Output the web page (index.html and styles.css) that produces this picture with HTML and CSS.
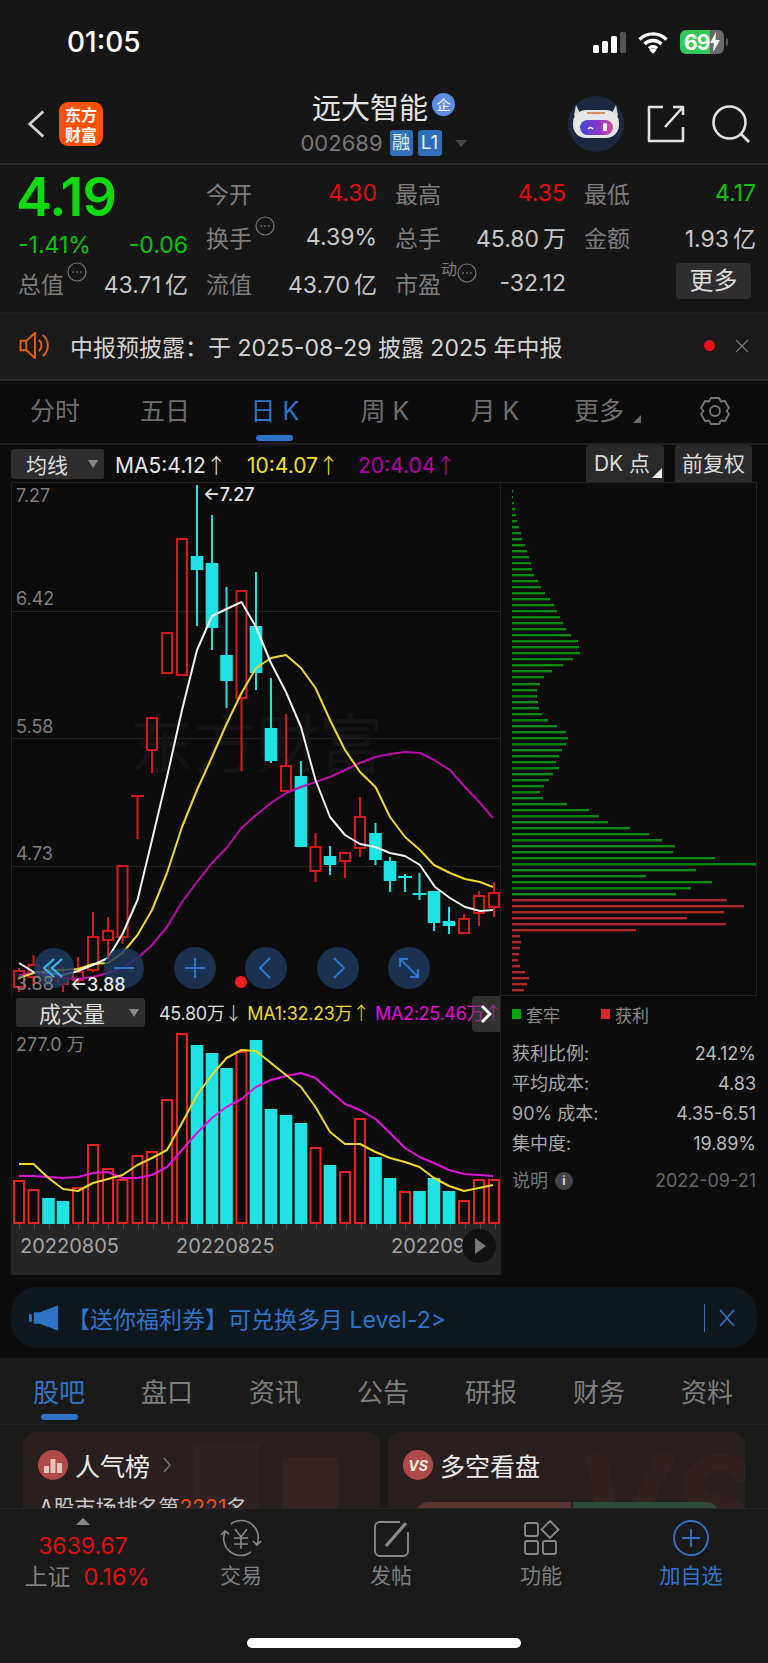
FILE: index.html
```html
<!DOCTYPE html>
<html lang="zh">
<head>
<meta charset="utf-8">
<title>远大智能</title>
<link rel="stylesheet" href="styles.css">
</head>
<body>
<div class="page">
  <header class="status">
    <span class="time">01:05</span>
    <div class="status-icons">
      <div class="signal"><i class="b1"></i><i class="b2"></i><i class="b3"></i><i class="b4"></i></div>
      <svg class="wifi" viewBox="0 0 30 23"><path d="M1.5 8.5a19 19 0 0 1 27 0M6.5 13a12 12 0 0 1 17 0M11 17.4a5.500 5.500 0 0 1 8 0" fill="none" stroke="#fff" stroke-width="3.400"/><path d="M15 23l-3.600-4a5 5 0 0 1 7.200 0z" fill="#fff"/></svg>
      <div class="battery"><span class="batt-num">69</span><svg class="bolt" viewBox="0 0 10 20"><path d="M6 0L0 11h4l-1 9 7-12H5.500z" fill="#fff"/></svg></div>
      <i class="nub"></i>
    </div>
  </header>

  <nav class="nav">
    <div class="nav-left">
      <svg class="back" viewBox="0 0 20 32"><path d="M18 2L3 16l15 14" fill="none" stroke="#d4d4d4" stroke-width="3"/></svg>
      <div class="logo"><span>东方</span><span>财富</span></div>
    </div>
    <div class="nav-center">
      <div class="title-row"><span class="title">远大智能</span><span class="qi">企</span></div>
      <div class="code-row"><span class="code">002689</span><span class="tag tag-rong">融</span><span class="tag tag-l1">L1</span><i class="caret"></i></div>
    </div>
    <div class="nav-right">
      <svg class="avatar" viewBox="0 0 56 56">
        <defs><linearGradient id="visor" x1="0" x2="1"><stop offset="0" stop-color="#3d49d8"/><stop offset=".55" stop-color="#8a35c8"/><stop offset="1" stop-color="#d84a9c"/></linearGradient></defs>
        <circle cx="28" cy="28" r="28" fill="#1c2740"/>
        <path d="M8 9l4 8h32l4-8 2 10-4 6H10l-4-6z" fill="#d8d8d8"/>
        <rect x="5" y="14" width="46" height="28" rx="13" fill="#e6e6e6"/>
        <rect x="19" y="16" width="18" height="2" fill="#d09060"/>
        <rect x="12" y="24" width="33" height="15" rx="7.500" fill="url(#visor)"/>
        <path d="M20 33q2.500-3 5 0" fill="none" stroke="#fff" stroke-width="1.500"/>
        <rect x="35" y="27" width="4" height="8" rx="1.500" fill="#fff"/>
      </svg>
      <svg class="share" viewBox="0 0 38 38"><path d="M16 2H2v34h34V22M36 10V2H26M36 2L18 22" fill="none" stroke="#e2e2e2" stroke-width="2.600" stroke-linejoin="round"/></svg>
      <svg class="search" viewBox="0 0 38 38"><circle cx="17.500" cy="17.500" r="16" fill="none" stroke="#e2e2e2" stroke-width="2.600"/><path d="M29 29l8 8" stroke="#e2e2e2" stroke-width="2.600"/></svg>
    </div>
  </nav>

  <section class="quote">
    <div class="price">4.19</div>
    <div class="cell"><span class="lbl">今开</span><span class="rd">4.30</span></div>
    <div class="cell"><span class="lbl">最高</span><span class="rd">4.35</span></div>
    <div class="cell"><span class="lbl">最低</span><span class="gn">4.17</span></div>

    <div class="cell change"><span class="gn">-1.41%</span><span class="gn">-0.06</span></div>
    <div class="cell"><span class="lbl">换手<svg class="dots" viewBox="0 0 20 20"><circle cx="10" cy="10" r="9" fill="none" stroke="#777" stroke-width="1.200"/><path d="M5.500 10h1.500M9.300 10h1.500M13 10h1.500" stroke="#777" stroke-width="1.500"/></svg></span><span class="val">4.39%</span></div>
    <div class="cell"><span class="lbl">总手</span><span class="val">45.80<span class="unit">万</span></span></div>
    <div class="cell"><span class="lbl">金额</span><span class="val">1.93<span class="unit">亿</span></span></div>

    <div class="cell"><span class="lbl">总值<svg class="dots" viewBox="0 0 20 20"><circle cx="10" cy="10" r="9" fill="none" stroke="#777" stroke-width="1.200"/><path d="M5.500 10h1.500M9.300 10h1.500M13 10h1.500" stroke="#777" stroke-width="1.500"/></svg></span><span class="val">43.71<span class="unit">亿</span></span></div>
    <div class="cell"><span class="lbl">流值</span><span class="val">43.70<span class="unit">亿</span></span></div>
    <div class="cell"><span class="lbl">市盈<sup class="dyn">动</sup><svg class="dots dots-tight" viewBox="0 0 20 20"><circle cx="10" cy="10" r="9" fill="none" stroke="#777" stroke-width="1.200"/><path d="M5.500 10h1.500M9.300 10h1.500M13 10h1.500" stroke="#777" stroke-width="1.500"/></svg></span><span class="val">-32.12</span></div>
    <div class="cell cell-end"><button class="more">更多</button></div>
  </section>

  <section class="notice">
    <svg class="speaker" viewBox="0 0 32 28"><path d="M2 9h6l9-8v26l-9-8H2zM8 9v10M21 8a8 8 0 0 1 0 12M25 3a14 14 0 0 1 0 22" fill="none" stroke="#e4600f" stroke-width="2"/></svg>
    <span class="notice-text">中报预披露：于 2025-08-29 披露 2025 年中报</span>
    <i class="red-dot"></i>
    <svg class="close-x" viewBox="0 0 14 14"><path d="M1 1l12 12M13 1L1 13" stroke="#777" stroke-width="1.300"/></svg>
  </section>

  <section class="ktabs">
    <span class="ktab">分时</span>
    <span class="ktab">五日</span>
    <span class="ktab ktab-on">日 K</span>
    <span class="ktab">周 K</span>
    <span class="ktab">月 K</span>
    <span class="ktab ktab-more"><span class="more-t">更多</span></span>
    <span class="ktab"><svg class="gear" viewBox="0 0 30 30"><path d="M11 2h8l2 3.500 4-.5 4 7-2.500 3 2.500 3-4 7-4-.5-2 3.500h-8l-2-3.500-4 .5-4-7L3.500 15 1 12l4-7 4 .5z" fill="none" stroke="#777" stroke-width="1.800" stroke-linejoin="round"/><circle cx="15" cy="15" r="5" fill="none" stroke="#777" stroke-width="1.800"/></svg></span>
  </section>

  <section class="ma-row">
    <div class="select select-ma">均线<i class="sel-caret"></i></div>
    <span class="ma ma-w">MA5:4.12<span class="arr">↑</span></span>
    <span class="ma ma-y">10:4.07<span class="arr">↑</span></span>
    <span class="ma ma-m">20:4.04<span class="arr">↑</span></span>
    <div class="ma-btn ma-dk">DK 点<i class="corner"></i></div>
    <div class="ma-btn ma-fq">前复权</div>
  </section>

  <section class="chart">
    <div class="chart-left">
      <svg class="kline" viewBox="0 482 500 514">
        <path class="frame" d="M11.500 996V482.500H500"/>
        <path class="frame" d="M11 611.500H500M11 738.500H500M11 866.500H500"/>
        <text class="wm" x="130" y="768">东方财富</text>
        <text class="axis" x="16" y="502">7.27</text>
        <text class="axis" x="16" y="605">6.42</text>
        <text class="axis" x="16" y="733">5.58</text>
        <text class="axis" x="16" y="860">4.73</text>
        <path class="wick-c" d="M48.500 965V982M197 485V626M212 515V650M226.500 587V708M256 572V690M271 678V763M301 761V776M330 846V875M375.500 823V865M390 857V892M405 874V892M419.500 873V900M434 923V931M449 907V934"/>
        <path class="wick-r" d="M19 968V971M19 987V992M33.500 955V965M33.500 977V985M63 967V978M63 984V992M78 957V972M78 980V985M93 912V937M93 970V972M108 917V931M108 940V957M122.500 937V944M131 796H144M137.500 796V839M152 750V773M241.500 698V771M286 714V766M315.500 833V847M315.500 871V882M345 861V878M360 797V817M360 848V857M464 914V919M479 891V896M479 913V926M494 882V893M494 907V917"/>
        <g class="dn">
          <rect x="42.200" y="970" width="12.600" height="7"/><rect x="190.700" y="556" width="12.600" height="14"/><rect x="205.700" y="563" width="12.600" height="65"/><rect x="220.200" y="655" width="12.600" height="26"/><rect x="249.700" y="626" width="12.600" height="47"/><rect x="264.700" y="728" width="12.600" height="33"/><rect x="294.700" y="776" width="12.600" height="71"/><rect x="323.700" y="856" width="12.600" height="9"/><rect x="369.200" y="833" width="12.600" height="27"/><rect x="383.700" y="861" width="12.600" height="20"/><rect x="398" y="876" width="14" height="2"/><rect x="412.500" y="893" width="14" height="2"/><rect x="427.700" y="891" width="12.600" height="32"/><rect x="442.700" y="921" width="12.600" height="5"/>
        </g>
        <g class="up">
          <rect x="14" y="971" width="10" height="16"/><rect x="28.500" y="965" width="10" height="12"/><rect x="58" y="978" width="10" height="6"/><rect x="73" y="972" width="10" height="8"/><rect x="88" y="937" width="10" height="33"/><rect x="103" y="931" width="10" height="9"/><rect x="117.500" y="866" width="10" height="71"/><rect x="147" y="718" width="10" height="32"/><rect x="162" y="633" width="10" height="40"/><rect x="177" y="539" width="10" height="136"/><rect x="236.500" y="591" width="10" height="107"/><rect x="281" y="766" width="10" height="25"/><rect x="310.500" y="847" width="10" height="24"/><rect x="340" y="853" width="10" height="8"/><rect x="355" y="817" width="10" height="31"/><rect x="459" y="919" width="10" height="14"/><rect x="474" y="896" width="10" height="17"/><rect x="489" y="893" width="10" height="14"/>
        </g>
        <polyline class="ln-m" points="19,975 33.500,973 48.500,975 63,978 78,979 93,977 108,973 122.500,968 137.500,958 152,945 167,927 182,902 197,882 212,863 226.500,848 241.500,828 256,815 271,803 286,793 301,787 315.500,782 330,777 345,770 360,763 375.500,757 390,754 405,752 420,753 434,760 450,770 465,787 480,803 493,818"/>
        <polyline class="ln-y" points="19,978 33.500,973 48.500,970 63,970 78,969 93,964 108,963 122.500,953 137.500,935 152,910 167,873 182,827 197,790 212,757 226.500,724 241.500,693 256,668 271,658 286,655 301,668 315.500,688 330,720 345,750 360,772 375.500,787 390,817 405,837 420,850 434,865 450,873 465,879 480,882 493,887"/>
        <polyline class="ln-w" points="19,963 33.500,972 48.500,973 63,975 78,971 93,965 108,958 122.500,934 137.500,900 152,840 167,777 182,710 197,650 212,616 226.500,609 241.500,602 256,627 271,663 286,692 301,727 315.500,780 330,817 345,835 360,844 375.500,847 390,853 405,856 420,865 435,887 450,898 465,907 480,911 493,910"/>
        <text class="mark" x="203" y="501">←7.27</text>
        <g class="ctl">
          <circle cx="54" cy="968" r="20"/><circle cx="124" cy="968" r="20"/><circle cx="195" cy="968" r="21"/><circle cx="266" cy="968" r="21"/><circle cx="338" cy="968" r="21"/><circle cx="409" cy="968" r="21"/>
        </g>
        <g class="ctl-i">
          <path d="M54 959l-10 9 10 9M62 959l-10 9 10 9" class="ctl-cyan"/>
          <path d="M114 968h20M185 968h20M195 958v20M270 958l-10 10 10 10M334 958l10 10-10 10M400 967v-8h8M400 959l18 18M418 969v8h-8"/>
        </g>
        <text class="axis" x="16" y="990">3.88</text>
        <text class="mark" x="70" y="991">←3.88</text>
        <circle class="rdot" cx="241" cy="982" r="6"/>
      </svg>

      <div class="vol-head">
        <div class="select select-vol">成交量<i class="sel-caret"></i></div>
        <span class="vt vt-w">45.80万<span class="arr">↓</span></span>
        <span class="vt vt-y">MA1:32.23万<span class="arr">↑</span></span>
        <span class="vt vt-m">MA2:25.46万<span class="arr">↑</span></span>
        <div class="expander"><svg viewBox="0 0 12 20"><path d="M2 2l8 8-8 8" fill="none" stroke="#fff" stroke-width="3"/></svg></div>
      </div>

      <svg class="vol" viewBox="0 1031 500 193">
        <path class="frame" d="M11.500 1031V1224"/>
        <g class="dn">
          <rect x="42.200" y="1198" width="12.600" height="26"/><rect x="56.700" y="1201" width="12.600" height="23"/><rect x="190.700" y="1045" width="12.600" height="179"/><rect x="205.700" y="1053" width="12.600" height="171"/><rect x="220.200" y="1068" width="12.600" height="156"/><rect x="249.700" y="1040" width="12.600" height="184"/><rect x="264.700" y="1109" width="12.600" height="115"/><rect x="279.700" y="1115" width="12.600" height="109"/><rect x="294.700" y="1123" width="12.600" height="101"/><rect x="323.700" y="1165" width="12.600" height="59"/><rect x="369.200" y="1157" width="12.600" height="67"/><rect x="383.700" y="1178" width="12.600" height="46"/><rect x="413.200" y="1191" width="12.600" height="33"/><rect x="427.700" y="1178" width="12.600" height="46"/><rect x="442.700" y="1191" width="12.600" height="33"/>
        </g>
        <g class="up up-v">
          <rect x="14" y="1181" width="10" height="42"/><rect x="28.500" y="1190" width="10" height="33"/><rect x="73" y="1188" width="10" height="35"/><rect x="88" y="1145" width="10" height="78"/><rect x="103" y="1169" width="10" height="54"/><rect x="117.500" y="1180" width="10" height="43"/><rect x="132.500" y="1156" width="10" height="67"/><rect x="147" y="1152" width="10" height="71"/><rect x="162" y="1100" width="10" height="123"/><rect x="177" y="1034" width="10" height="189"/><rect x="236.500" y="1052" width="10" height="171"/><rect x="310.500" y="1148" width="10" height="75"/><rect x="340" y="1172" width="10" height="51"/><rect x="355" y="1119" width="10" height="104"/><rect x="400" y="1192" width="10" height="31"/><rect x="459" y="1201" width="10" height="22"/><rect x="474" y="1180" width="10" height="43"/><rect x="489" y="1180" width="10" height="43"/>
        </g>
        <polyline class="ln-m2" points="19,1176 33.500,1176 48.500,1177 63,1178 78,1177 93,1173 108,1172 122.500,1178 137.500,1178 152,1175 167,1167 182,1150 197,1133 212,1118 226.500,1107 241.500,1099 256,1087 271,1080 286,1076 301,1073 315.500,1078 330,1091 345,1104 360,1110 375.500,1119 390,1133 405,1148 419.500,1157 434,1163 449,1170 464,1174 479,1175 493,1176"/>
        <polyline class="ln-y" points="19,1164 33.500,1164 48.500,1178 63,1189 78,1191 93,1183 108,1179 122.500,1175 137.500,1165 152,1158 167,1150 182,1123 197,1095 212,1075 226.500,1058 241.500,1050 256,1051 271,1063 286,1075 301,1087 315.500,1107 330,1132 345,1144 360,1144 375.500,1152 390,1158 405,1162 419.500,1167 434,1178 449,1186 464,1191 479,1188 493,1185"/>
        <text class="axis" x="16" y="1051">277.0 万</text>
      </svg>

      <div class="xaxis">
        <div class="ticks"></div>
        <span class="xl xl1">20220805</span>
        <span class="xl xl2">20220825</span>
        <span class="xl xl3">202209</span>
        <div class="play"><i></i></div>
      </div>
    </div>

    <aside class="chart-right">
      <div class="chips">
        <i class="g" style="width:1px"></i><i class="g" style="width:1px"></i><i class="g" style="width:2px"></i><i class="g" style="width:3px"></i><i class="g" style="width:4px"></i><i class="g" style="width:5px"></i><i class="g" style="width:7px"></i><i class="g" style="width:9px"></i><i class="g" style="width:10px"></i><i class="g" style="width:13px"></i><i class="g" style="width:15px"></i><i class="g" style="width:17px"></i><i class="g" style="width:19px"></i><i class="g" style="width:20px"></i><i class="g" style="width:22px"></i><i class="g" style="width:26px"></i><i class="g" style="width:29px"></i><i class="g" style="width:33px"></i><i class="g" style="width:38px"></i><i class="g" style="width:42px"></i><i class="g" style="width:45px"></i><i class="g" style="width:48px"></i><i class="g" style="width:51px"></i><i class="g" style="width:54px"></i><i class="g" style="width:59px"></i><i class="g" style="width:66px"></i><i class="g" style="width:67px"></i><i class="g" style="width:68px"></i><i class="g" style="width:61px"></i><i class="g" style="width:51px"></i><i class="g" style="width:40px"></i><i class="g" style="width:32px"></i><i class="g" style="width:28px"></i><i class="g" style="width:25px"></i><i class="g" style="width:25px"></i><i class="g" style="width:26px"></i><i class="g" style="width:27px"></i><i class="g" style="width:30px"></i><i class="g" style="width:36px"></i><i class="g" style="width:45px"></i><i class="g" style="width:54px"></i><i class="g" style="width:56px"></i><i class="g" style="width:54px"></i><i class="g" style="width:50px"></i><i class="g" style="width:47px"></i><i class="g" style="width:44px"></i><i class="g" style="width:47px"></i><i class="g" style="width:41px"></i><i class="g" style="width:37px"></i><i class="g" style="width:32px"></i><i class="g" style="width:28px"></i><i class="g" style="width:31px"></i><i class="g" style="width:55px"></i><i class="g" style="width:77px"></i><i class="g" style="width:87px"></i><i class="g" style="width:96px"></i><i class="g" style="width:118px"></i><i class="g" style="width:137px"></i><i class="g" style="width:150px"></i><i class="g" style="width:163px"></i><i class="g" style="width:161px"></i><i class="g" style="width:203px"></i><i class="g" style="width:244px"></i><i class="g" style="width:184px"></i><i class="g" style="width:134px"></i><i class="g" style="width:200px"></i><i class="g" style="width:179px"></i><i class="g" style="width:164px"></i>
        <i class="r" style="width:215px"></i><i class="r" style="width:232px"></i><i class="r" style="width:212px"></i><i class="r" style="width:175px"></i><i class="r" style="width:214px"></i><i class="r" style="width:124px"></i><i class="r" style="width:8px"></i><i class="r" style="width:9px"></i><i class="r" style="width:8px"></i><i class="r" style="width:7px"></i><i class="r" style="width:6px"></i><i class="r" style="width:8px"></i><i class="r" style="width:13px"></i><i class="r" style="width:17px"></i><i class="r" style="width:15px"></i><i class="r" style="width:12px"></i>
      </div>
      <div class="stats">
        <div class="legend"><i class="sq sq-g"></i><span class="leg-t">套牢</span><i class="sq sq-r"></i><span class="leg-t">获利</span></div>
        <div class="stat"><span>获利比例:</span><span class="sv">24.12%</span></div>
        <div class="stat"><span>平均成本:</span><span class="sv">4.83</span></div>
        <div class="stat"><span>90% 成本:</span><span class="sv">4.35-6.51</span></div>
        <div class="stat"><span>集中度:</span><span class="sv">19.89%</span></div>
        <div class="stat stat-note"><span class="note">说明<b class="info">i</b></span><span>2022-09-21</span></div>
      </div>
    </aside>
  </section>

  <section class="banner-wrap">
    <div class="banner">
      <svg class="horn" viewBox="0 0 30 26"><path d="M0 9h3v8H0zM5 7h6L30 0v26L11 19H5z" fill="#2f74c9"/></svg>
      <span class="banner-text">【送你福利券】可兑换多月 Level-2&gt;</span>
      <i class="banner-div"></i>
      <svg class="banner-x" viewBox="0 0 16 18"><path d="M1 1l14 16M15 1L1 17" stroke="#2f74c9" stroke-width="1.600"/></svg>
    </div>
  </section>

  <section class="detail">
    <div class="dtabs">
      <span class="dtab dtab-on">股吧</span><span class="dtab">盘口</span><span class="dtab">资讯</span><span class="dtab">公告</span><span class="dtab">研报</span><span class="dtab">财务</span><span class="dtab">资料</span>
    </div>
    <div class="cards">
      <article class="card card-rank">
        <i class="deco deco-a"></i><i class="deco deco-b"></i>
        <div class="card-head">
          <span class="badge"><svg viewBox="0 0 30 30"><path d="M6 16h5v7H6zM12.500 9h5v14h-5zM19 13h5v10h-5z" fill="#e8c4c0"/></svg></span>
          <span class="card-title">人气榜</span>
          <svg class="card-chev" viewBox="0 0 8 16"><path d="M1 1l6 7-6 7" fill="none" stroke="#777" stroke-width="1.500"/></svg>
        </div>
        <p class="rank-line">A股市场排名第<em>2221</em>名</p>
      </article>
      <article class="card card-vs">
        <span class="vs-bg">VS</span>
        <div class="card-head">
          <span class="badge badge-vs">VS</span>
          <span class="card-title">多空看盘</span>
        </div>
        <div class="vs-box"><i class="vs-l"></i><i class="vs-r"></i></div>
      </article>
    </div>
  </section>

  <footer class="bottom">
    <div class="index">
      <i class="tri-up"></i>
      <div class="idx-num">3639.67</div>
      <div class="idx-row"><span class="idx-name">上证</span><span class="idx-pct">0.16%</span></div>
    </div>
    <div class="bt">
      <svg class="bt-i" viewBox="0 0 42 40"><path d="M5 14A17 17 0 0 0 31 34M11 6A17 17 0 0 1 37 26" fill="none" stroke="#8a8a8a" stroke-width="1.600"/><path d="M1 17l4-4 4 3M33 23l4 4 4-4" fill="none" stroke="#8a8a8a" stroke-width="1.600"/><path d="M15 11l6 8 6-8M14 20h14M14 26h14M21 19v12" fill="none" stroke="#8a8a8a" stroke-width="1.600"/></svg>
      <span>交易</span>
    </div>
    <div class="bt">
      <svg class="bt-i" viewBox="0 0 42 40"><path d="M30 4H10a5 5 0 0 0-5 5v24a5 5 0 0 0 5 5h23a5 5 0 0 0 5-5V14" fill="none" stroke="#8a8a8a" stroke-width="1.800"/><path d="M16 28L36 5" stroke="#8a8a8a" stroke-width="3.200"/></svg>
      <span>发帖</span>
    </div>
    <div class="bt">
      <svg class="bt-i" viewBox="0 0 42 40"><g fill="none" stroke="#8a8a8a" stroke-width="1.800"><rect x="5" y="5" width="13" height="13" rx="2"/><path d="M30 3l8.500 8.500L30 20l-8.500-8.500z"/><rect x="5" y="23" width="13" height="13" rx="2"/><rect x="23" y="23" width="13" height="13" rx="2"/></g></svg>
      <span>功能</span>
    </div>
    <div class="bt bt-on">
      <svg class="bt-i" viewBox="0 0 42 40"><circle cx="21" cy="20" r="17" fill="none" stroke="#2f74c9" stroke-width="1.800"/><path d="M12 20h18M21 11v18" stroke="#2f74c9" stroke-width="1.800"/></svg>
      <span>加自选</span>
    </div>
    <i class="home"></i>
  </footer>
</div>
</body>
</html>
```

FILE: styles.css
```css
* { box-sizing: border-box; }
html, body { margin: 0; padding: 0; background: #0c0c0c; }
body { font-family: Inter, "Noto Sans CJK SC", sans-serif; color: #ccc; }
.page { width: 768px; height: 1663px; overflow: hidden; display: flex; flex-direction: column; }
i { display: block; font-style: normal; }

/* status */
.status { height: 85px; background: #161616; display: flex; justify-content: space-between; padding: 26px 40px 0 67px; flex: none; }
.time { font-size: 28px; color: #fff; font-weight: 500; line-height: 32px; }
.status-icons { display: flex; align-items: center; height: 32px; gap: 0; }
.signal { display: flex; align-items: flex-end; gap: 3px; height: 21px; margin-right: 12px; }
.signal i { width: 6px; background: #fff; border-radius: 1.500px; }
.signal .b1 { height: 8px; } .signal .b2 { height: 12px; } .signal .b3 { height: 17px; }
.signal .b4 { height: 21px; background: #555; }
.wifi { width: 30px; height: 23px; margin-right: 12px; }
.battery { width: 44px; height: 24px; border-radius: 6px; background: linear-gradient(90deg, #34c759 0 68%, #6a6a6a 68%); display: flex; align-items: center; padding-left: 4px; }
.batt-num { font-size: 21px; font-weight: 700; color: #fff; letter-spacing: -1px; }
.bolt { width: 10px; height: 20px; margin-left: 1px; }
.nub { width: 2px; height: 8px; background: #555; margin-left: 2px; border-radius: 0 2px 2px 0; }

/* nav */
.nav { height: 80px; background: #161616; border-bottom: 2px solid #2a2a2a; display: grid; grid-template-columns: 1fr auto 1fr; align-items: center; padding: 0 18px 0 27px; flex: none; }
.nav-left { display: flex; align-items: center; gap: 14px; }
.back { width: 18px; height: 32px; }
.logo { width: 44px; height: 44px; border-radius: 9px; background: #ff5208; color: #fff; font-size: 16px; font-weight: 700; font-family: "Noto Sans CJK SC", sans-serif; display: flex; flex-direction: column; align-items: center; justify-content: center; }
.logo span { line-height: 20px; }
.nav-center { display: flex; flex-direction: column; align-items: center; margin: -4px 10px 0 0; }
.title-row { display: flex; align-items: center; height: 38px; }
.title { font-size: 29px; color: #e4e4e4; font-family: "Noto Sans CJK SC", sans-serif; line-height: 38px; }
.qi { width: 23px; height: 23px; border-radius: 50%; background: #5d8be6; color: #fff; font-size: 14px; line-height: 23px; text-align: center; margin-left: 4px; margin-top: -3px; }
.code-row { display: flex; align-items: center; height: 28px; margin-top: 4px; }
.code { font-size: 22px; color: #777; margin-right: 7px; }
.tag { height: 26px; line-height: 26px; background: #2f6fb8; color: #e6eefa; border-radius: 3px; text-align: center; font-size: 18px; }
.tag-rong { width: 23px; }
.tag-l1 { width: 24px; margin-left: 5px; font-size: 19px; }
.caret { width: 0; height: 0; border-left: 6.500px solid transparent; border-right: 6.500px solid transparent; border-top: 7px solid #444; margin-left: 13px; }
.nav-right { display: flex; align-items: center; justify-content: flex-end; }
.avatar { width: 56px; height: 56px; margin-right: 23px; }
.share { width: 38px; height: 38px; margin-right: 27px; }
.search { width: 38px; height: 38px; }

/* quote */
.quote { height: 149px; background: #161616; border-bottom: 2px solid #202020; padding: 6px 11px 0 18px; display: grid; grid-template-columns: 170px 171px 171px 172px; grid-template-rows: 44px 44px 48px; column-gap: 18px; flex: none; font-size: 23px; }
.cell { display: flex; justify-content: space-between; align-items: center; white-space: nowrap; }
.cell-end { justify-content: flex-end; padding: 0 5px 4px 0; }
.change { padding-top: 16px; }
.price { font-size: 54px; line-height: 48px; color: #0fd90f; font-weight: 600; letter-spacing: -1px; margin: 2px 0 0 -2px; }
.lbl { color: #7d7d7d; display: inline-flex; align-items: flex-start; font-family: "Noto Sans CJK SC", sans-serif; }
.rd { color: #e00d0d; } .gn { color: #0bc40b; } .val { color: #c8c8c8; }
.unit { margin-left: 4px; }
.dots { width: 20px; height: 20px; margin: -4px 0 0 3px; flex: none; }
.dots-tight { margin-left: 0; margin-top: -3px; }
.dyn { font-size: 16px; line-height: 16px; vertical-align: top; margin-top: -6px; color: #7d7d7d; }
.more { width: 75px; height: 36px; background: #2e2e2e; border: 0; border-radius: 4px; color: #ddd; font: inherit; font-size: 24px; line-height: 36px; padding: 0; }

/* notice */
.notice { height: 67px; background: #1a1a1a; border-bottom: 2px solid #2a2a2a; display: flex; align-items: center; padding: 0 19px 2px 18px; flex: none; }
.speaker { width: 32px; height: 27px; margin-right: 20px; }
.notice-text { font-size: 23px; color: #d4d4d4; flex: 1; white-space: nowrap; }
.red-dot { width: 11px; height: 11px; border-radius: 50%; background: #e8101a; margin-right: 20px; }
.close-x { width: 14px; height: 14px; }

/* k tabs */
.ktabs { height: 64px; background: #0c0c0c; border-bottom: 2px solid #202020; display: grid; grid-template-columns: repeat(7, 110px); align-items: center; flex: none; padding-bottom: 2px; }
.ktab { font-size: 25px; color: #6e6e6e; text-align: center; position: relative; line-height: 34px; white-space: nowrap; }
.ktab-on { color: #2f74c9; }
.ktab-on::after { content: ""; position: absolute; left: 36px; top: 41px; width: 37px; height: 6px; border-radius: 3px; background: #2f74c9; }
.more-t { position: relative; left: -6px; }
.ktab-more::after { content: ""; position: absolute; left: 83px; top: 21px; border-left: 8px solid transparent; border-bottom: 8px solid #6e6e6e; }
.gear { width: 30px; height: 30px; display: block; margin: 0 auto; }

/* ma row */
.ma-row { height: 37px; display: flex; align-items: center; padding: 0 16px 0 11px; flex: none; background: #0c0c0c; }
.select { background: #2e2e2e; border-radius: 3px; color: #ddd; position: relative; font-family: "Noto Sans CJK SC", sans-serif; flex: none; }
.select-ma { width: 93px; height: 30px; line-height: 30px; font-size: 21px; padding-left: 15px; margin-right: 11px; }
.sel-caret { position: absolute; right: 6px; top: 11px; border-left: 5px solid transparent; border-right: 5px solid transparent; border-top: 8px solid #888; }
.ma { font-size: 21px; white-space: nowrap; }
.arr { font-family: "Noto Sans CJK JP", sans-serif; font-weight: 300; }
.ma-w { color: #e6e6e6; width: 132px; } .ma-y { color: #f0e030; width: 111px; } .ma-m { color: #b400a8; }
.ma-btn { height: 37px; line-height: 37px; background: #2a2a2a; border-radius: 4px 4px 0 0; color: #ddd; font-size: 21px; text-align: center; position: relative; }
.ma-dk { width: 78px; margin-left: auto; padding-right: 6px; }
.ma-fq { width: 77px; margin-left: 11px; }
.corner { position: absolute; right: 2px; bottom: 4px; border-left: 10px solid transparent; border-bottom: 10px solid #eee; }

/* chart */
.chart { display: flex; height: 793px; flex: none; background: #0c0c0c; }
.chart-left { width: 500px; flex: none; display: flex; flex-direction: column; }
.kline { width: 500px; height: 514px; display: block; flex: none; }
.vol { width: 500px; height: 193px; display: block; flex: none; }
.frame { fill: none; stroke: #232323; stroke-width: 1; }
.wm { font-size: 64px; fill: #141414; letter-spacing: -1px; font-family: "Noto Sans CJK SC", sans-serif; }
.axis { font-size: 18px; fill: #7f7f7f; }
.mark { font-size: 18px; fill: #e8e8e8; font-weight: 500; }
.wick-c { fill: none; stroke: #1fe2e2; stroke-width: 2; }
.wick-r { fill: none; stroke: #d21c18; stroke-width: 2; }
.dn rect { fill: #1fe2e2; }
.up rect { fill: none; stroke: #d21c18; stroke-width: 2; }
.up-v rect { stroke: #e8231d; }
.ln-w, .ln-y, .ln-m, .ln-m2 { fill: none; stroke-width: 2; stroke-linejoin: round; }
.ln-w { stroke: #f2f2f2; } .ln-y { stroke: #efd92e; } .ln-m { stroke: #b90fa8; } .ln-m2 { stroke: #e014d8; }
.ctl circle { fill: #1d3a5e; fill-opacity: .82; }
.ctl-i path { fill: none; stroke: #2f74c9; stroke-width: 2.200; }
.ctl-i .ctl-cyan { stroke: #3ab4ea; }
.rdot { fill: #f02020; }

.vol-head { height: 35px; display: flex; align-items: center; padding-left: 16px; position: relative; flex: none; white-space: nowrap; }
.select-vol { width: 129px; height: 29px; line-height: 29px; font-size: 22px; padding-left: 23px; margin-right: 14px; margin-top: -3px; }
.vt { font-size: 18px; margin-right: 5px; letter-spacing: -.3px; margin-top: -3px; flex: none; }
.vt-w { color: #ddd; } .vt-y { color: #e6d92c; } .vt-m { color: #e010d8; margin-right: 0; }
.expander { position: absolute; left: 472px; top: 0; width: 28px; height: 36px; background: rgba(80, 80, 80, .55); border-radius: 4px 0 0 4px; display: flex; align-items: center; justify-content: center; }
.expander svg { width: 12px; height: 20px; }

.xaxis { height: 51px; margin-left: 11px; background: #252525; position: relative; flex: none; font-size: 20px; color: #a4a4a4; }
.ticks { height: 5px; background: repeating-linear-gradient(90deg, #4a4a4a 0 1px, transparent 1px 14.860px) 8px 0; }
.xl { position: absolute; top: 9px; line-height: 26px; }
.xl1 { left: 9px; } .xl2 { left: 165px; } .xl3 { left: 380px; }
.play { position: absolute; left: 451px; top: 5px; width: 34px; height: 34px; border-radius: 50%; background: #111; display: flex; align-items: center; justify-content: center; }
.play i { border-left: 11px solid #777; border-top: 8px solid transparent; border-bottom: 8px solid transparent; margin-left: 3px; }

.chart-right { width: 257px; border-left: 1px solid #232323; flex: none; display: flex; flex-direction: column; }
.chips { height: 514px; border: 1px solid #232323; border-left: 0; padding: 7px 0 0 11px; display: flex; flex-direction: column; gap: 4.020px; overflow: hidden; flex: none; }
.chips i { height: 2px; flex: none; }
.chips .g { background: #0b8a12; box-shadow: 0 1px 0 #063f09; }
.chips .r { background: #ad2a2a; box-shadow: 0 1px 0 #501515; }
.stats { padding: 8px 1px 0 11px; font-size: 18px; color: #a8a8a8; }
.legend { display: flex; align-items: center; height: 20px; margin-bottom: 15px; color: #888; font-size: 17px; }
.sq { width: 9px; height: 10px; }
.sq-g { background: #0aa50a; } .sq-r { background: #d42a2a; margin-left: 41px; }
.leg-t { margin-left: 5px; }
.stat { display: flex; justify-content: space-between; height: 30px; line-height: 30px; white-space: nowrap; }
.sv { color: #bbb; }
.stat-note { color: #666; margin-top: 7px; }
.note { color: #777; display: inline-flex; align-items: center; }
.info { width: 18px; height: 18px; border-radius: 50%; background: #444; color: #ddd; font-size: 12px; line-height: 18px; text-align: center; margin-left: 7px; }

/* banner */
.banner-wrap { height: 83px; padding: 12px 11px 0; background: #0c0c0c; flex: none; }
.banner { height: 61px; border-radius: 26px; background: #10181f; display: flex; align-items: center; padding: 0 22px 0 18px; }
.horn { width: 29px; height: 26px; margin-right: 10px; }
.banner-text { font-size: 23px; color: #2f74c9; flex: 1; margin-left: -1px; white-space: nowrap; }
.banner-div { width: 1px; height: 28px; background: #2f74c9; margin-right: 14px; }
.banner-x { width: 16px; height: 18px; }

/* detail */
.detail { height: 150px; background: #1a1a1a; flex: none; overflow: hidden; }
.dtabs { height: 67px; display: grid; grid-template-columns: repeat(7, 108px); padding-left: 5px; border-bottom: 1px solid #222; align-items: center; }
.dtab { font-size: 26px; color: #7e7e7e; text-align: center; line-height: 36px; position: relative; font-family: "Noto Sans CJK SC", sans-serif; }
.dtab-on { color: #2f74c9; }
.dtab-on::after { content: ""; position: absolute; left: 36px; top: 41px; width: 37px; height: 6px; border-radius: 3px; background: #2f74c9; }
.cards { display: flex; gap: 8px; padding: 7px 22px 0 23px; }
.card { width: 357px; height: 200px; border-radius: 13px; background: #2a1f1f; position: relative; overflow: hidden; flex: none; }
.card-head { display: flex; align-items: center; height: 30px; margin: 18px 0 0 15px; position: relative; }
.badge { width: 30px; height: 30px; border-radius: 50%; background: #b04a48; display: flex; align-items: center; justify-content: center; color: #eed; font-size: 14px; font-weight: 700; font-style: italic; flex: none; }
.badge svg { width: 30px; height: 30px; }
.card-title { font-size: 25px; color: #ececec; margin-left: 7px; font-family: "Noto Sans CJK SC", sans-serif; line-height: 30px; }
.card-chev { width: 8px; height: 16px; margin-left: 13px; }
.rank-line { position: relative; margin: 14px 0 0 16px; font-size: 21px; color: #c8c8c8; line-height: 28px; }
.rank-line em { font-style: normal; color: #ea4f14; }
.deco { position: absolute; }
.deco-a { left: 170px; top: 12px; width: 66px; height: 190px; background: #2e2222; }
.deco-b { left: 259px; top: 25px; width: 56px; height: 180px; background: #352322; }
.vs-bg { position: absolute; left: 185px; top: 6px; font-size: 130px; font-weight: 700; font-style: italic; color: #302221; line-height: 130px; }
.vs-box { position: relative; display: flex; margin: 22px 0 0 28px; width: 302px; height: 60px; border-radius: 12px 12px 0 0; overflow: hidden; }
.vs-l { width: 155px; background: #5a3630; } .vs-r { flex: 1; background: #2f4a3a; margin-left: 2px; }

/* bottom */
.bottom { height: 155px; background: #1a1a1a; border-top: 1px solid #272727; display: grid; grid-template-columns: 166px repeat(4, 150px); padding-top: 9px; position: relative; flex: none; align-content: start; }
.index { display: flex; flex-direction: column; align-items: center; }
.tri-up { border-left: 7px solid transparent; border-right: 7px solid transparent; border-bottom: 7px solid #888; }
.idx-num { font-size: 23px; color: #dd1010; line-height: 30px; margin-top: 6px; }
.idx-row { display: flex; align-items: center; padding-left: 8px; line-height: 32px; gap: 13px; white-space: nowrap; }
.idx-name { font-size: 23px; color: #7e7e7e; }
.idx-pct { font-size: 23.500px; color: #e01010; }
.bt { display: flex; flex-direction: column; align-items: center; font-size: 21px; color: #7e7e7e; }
.bt-i { width: 42px; height: 40px; margin-bottom: 1px; }
.bt span { line-height: 30px; font-family: "Noto Sans CJK SC", sans-serif; }
.bt-on { color: #2f74c9; }
.home { position: absolute; left: 247px; top: 129px; width: 274px; height: 10px; border-radius: 5px; background: #fff; }
```
